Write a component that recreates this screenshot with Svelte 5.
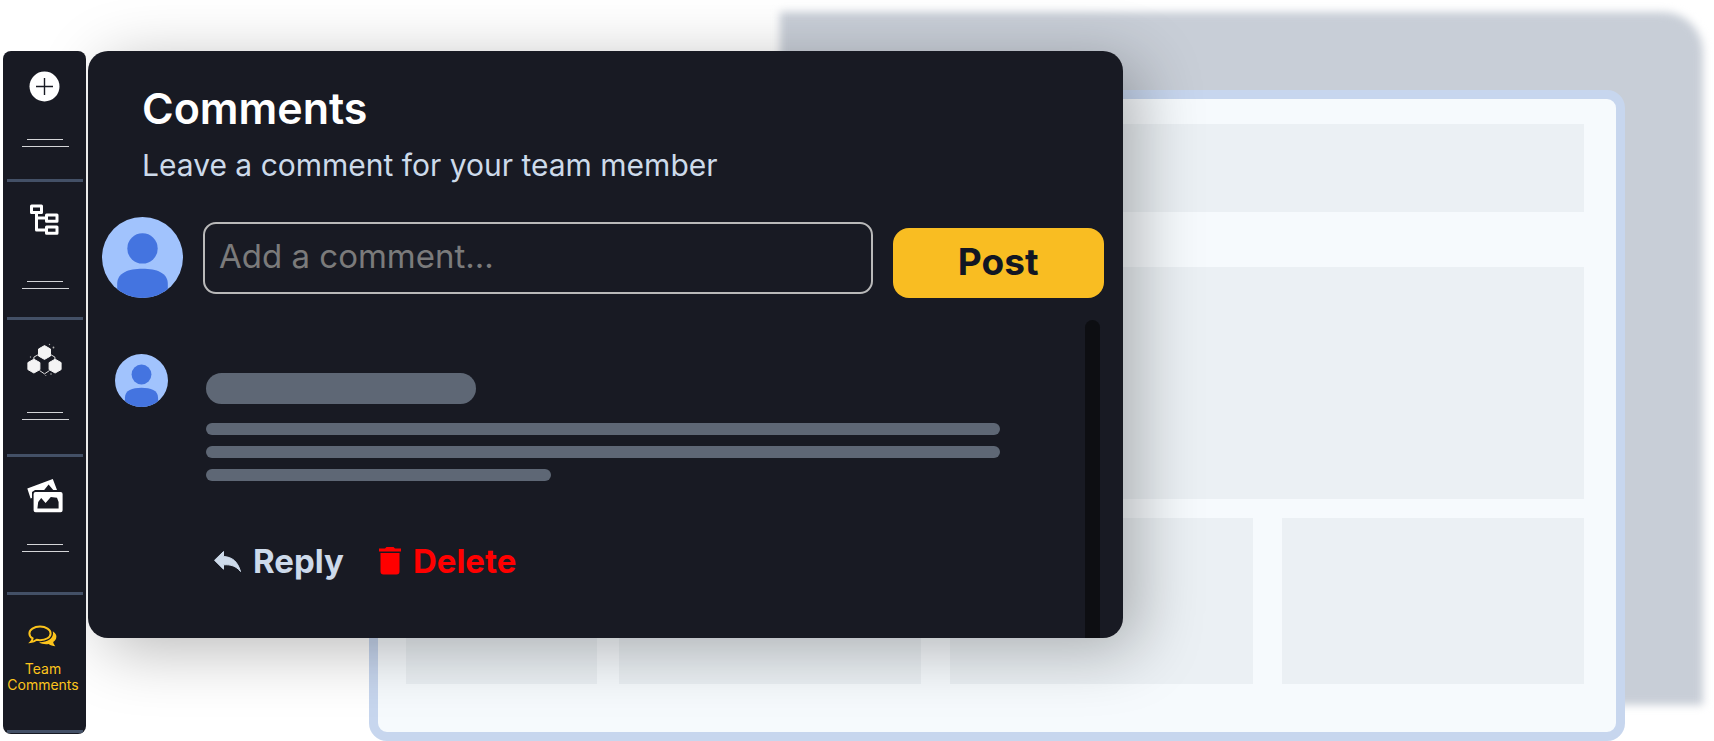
<script>
  const items = [
    { id: 'add', label: 'Add', gap: 32 },
    { id: 'tree', label: 'Structure', gap: 43 },
    { id: 'nodes', label: 'Modules', gap: 36 },
    { id: 'media', label: 'Media', gap: 31 },
  ];

  let comment = $state('');
</script>

{#snippet avatar()}
  <svg class="avatar" viewBox="0 0 80 80" aria-hidden="true">
    <clipPath id="avatar-clip"><circle cx="40" cy="40" r="40" /></clipPath>
    <circle cx="40" cy="40" r="40" fill="#a1c3fd" />
    <g clip-path="url(#avatar-clip)" fill="#4474e0">
      <circle cx="40" cy="31" r="15" />
      <path d="M15 66C15 55 26 51 40 51S65 55 65 66V80H15Z" />
    </g>
  </svg>
{/snippet}

<main>
  <div class="backdrop"></div>

  <div class="frame">
    <div class="block header"></div>
    <div class="block hero"></div>
    <div class="tiles">
      <div class="block small"></div>
      <div class="trio">
        <div class="block"></div>
        <div class="block"></div>
        <div class="block"></div>
      </div>
    </div>
  </div>

  <div class="front">
    <nav>
      {#each items as item}
        <button class="item" aria-label={item.label}>
          <svg class="icon" viewBox="0 0 36 36" aria-hidden="true">
            {#if item.id == 'add'}
              <circle cx="17.500" cy="15.500" r="15" fill="#fff" />
              <path d="M17.500 7v17M9 15.500h17" stroke="#181a23" stroke-width="1.4" />
            {:else if item.id == 'tree'}
              <g fill="none" stroke="#fff" stroke-width="3" stroke-linejoin="round">
                <path d="M4.5 4h10v6.4h-10zM19.500 13h10.500v6.200H19.500zM19.500 25h10.500v6.200H19.500zM9.500 10.500v17.600h10M9.500 16.100h10" />
              </g>
            {:else if item.id == 'nodes'}
              <g transform="translate(-.5 3)">
                <g fill="#f4f4f4" stroke="#f4f4f4" stroke-linejoin="round">
                  <path d="M18 2.600l6 3.400v7l-6 3.400L12 13V6z" />
                  <path d="M7.400 16.200l6 3.400v7l-6 3.400-6-3.400v-7z" />
                  <path d="M28.600 16.200l6 3.400v7l-6 3.400-6-3.400v-7z" />
                </g>
                <path d="M12 11.5l-4.6 2.6v2.4M24 11.5l4.4 2.6v2.4M13 27.500l5 3.400 5-3.400" fill="none" stroke="#ddd" stroke-width="1" />
                <g fill="#aaa">
                  <circle cx="23" cy="1.500" r=".7" />
                  <circle cx="27" cy="4.500" r=".9" />
                  <circle cx="4" cy="14" r=".7" />
                  <circle cx="24.500" cy="31" r=".8" />
                  <circle cx="19.300" cy="32.500" r=".6" />
                </g>
              </g>
            {:else}
              <path d="M.3 11.500L25.800 2 30 12.900H26.200L21.600 7.500l-4.400 5.400H8L5 15.100V21L3.600 21.500z" fill="#fff" />
              <path fill-rule="evenodd" d="M8.600 14.900h25a2 2 0 0 1 2 2v16.400a2 2 0 0 1-2 2h-25a2 2 0 0 1-2-2V16.900a2 2 0 0 1 2-2zM10.400 31.500h21.200V25l-1.600-4.300-6.200-.6-5.200 5.900-4.400-5-3 4z" fill="#fff" />
            {/if}
          </svg>
          <span class="dashes" style="margin-top: {item.gap}px"></span>
        </button>
      {/each}
      <button class="item active">
        <svg class="chat" viewBox="0 0 30 24" aria-hidden="true">
          <path d="M12 1.600c6 0 10.600 3 10.600 6.800s-4.600 6.800-10.600 6.800c-1.200 0-2.300-.1-3.300-.4-1.700 1.300-3.600 2.200-6 2.300 1-1 1.700-2.200 1.900-3.700C2.500 12.200 1.400 10.400 1.400 8.400c0-3.800 4.600-6.800 10.600-6.800z" fill="none" stroke="#fcc41c" stroke-width="2" />
          <path d="M24.800 6.200c2.200 1.400 3.600 3.300 3.600 5.400 0 2.400-1.300 4.200-3.200 5.500.3 1.600 1 2.900 2.200 4.200-2.700 0-5-.9-6.700-2.200-3.600.5-7.200 0-9.700-1.800C19 17.600 24.900 14 25 8.600z" fill="#fcc41c" />
        </svg>
        <span class="label">Team Comments</span>
      </button>
    </nav>

    <section class="panel">
      <h1>Comments</h1>
      <p>Leave a comment for your team member</p>

      <form class="composer" onsubmit={(e) => e.preventDefault()}>
        {@render avatar()}
        <input type="text" aria-label="Comment" placeholder="Add a comment..." bind:value={comment} />
        <button class="post">Post</button>
      </form>

      <div class="thread">
        {@render avatar()}
        <article>
          <div class="line author"></div>
          <div class="line"></div>
          <div class="line"></div>
          <div class="line short"></div>
          <div class="actions">
            <button class="reply">
              <svg width="27" height="21" viewBox="0 0 27 21" aria-hidden="true">
                <path d="M9.500.5v5C18 6 23.500 10 26.500 20.500 22 15 17 13.400 9.500 13.800v4.400L.5 9.300z" fill="currentColor" stroke="currentColor" stroke-linejoin="round" />
              </svg>
              Reply
            </button>
            <button class="delete">
              <svg width="22" height="28" viewBox="0 0 22 28" aria-hidden="true">
                <path d="M0 1.500h6L7.500 0h7L16 1.500h6v3H0zM1.500 6h19v18.500a3 3 0 0 1-3 3h-13a3 3 0 0 1-3-3z" fill="currentColor" />
              </svg>
              Delete
            </button>
          </div>
        </article>
        <div class="track"></div>
      </div>
    </section>
  </div>
</main>

<style>
  :global(body) {
    margin: 0;
    background: #fff;
  }
  main {
    display: grid;
    overflow: hidden;
    font-family: Inter, 'Liberation Sans', sans-serif;
  }
  main > div {
    grid-area: 1 / 1;
    box-sizing: border-box;
  }
  button {
    padding: 0;
    border: 0;
    background: none;
    font-family: inherit;
    cursor: pointer;
  }
  .backdrop {
    margin: 12px 11px 36px 45.5%;
    border-radius: 0 40px 0 0;
    background: #c8ced7;
    filter: blur(4px);
  }
  .frame {
    display: flex;
    flex-direction: column;
    margin: 90px 89px 0 21.5%;
    padding: 25px 32px 48px 28px;
    border: 9px solid #c7d6ee;
    border-radius: 18px;
    background: #f6fafd;
    z-index: 1;
  }
  .block {
    background: #ebf0f4;
  }
  .header {
    height: 88px;
  }
  .hero {
    height: 232px;
    margin: 55px 0 19px;
  }
  .tiles {
    display: flex;
    flex: 1;
    gap: 22px;
    min-height: 166px;
  }
  .small {
    flex: 191;
  }
  .trio {
    display: grid;
    flex: 965;
    grid-template-columns: repeat(3, 1fr);
    gap: 29px;
  }

  .front {
    display: flex;
    align-items: flex-start;
    gap: 2px;
    width: 65.5%;
    padding: 51px 0 7px 3px;
    z-index: 2;
  }
  nav {
    display: grid;
    flex: none;
    grid-template-rows: 131px 138px 137px 138px 138px;
    box-sizing: border-box;
    width: 83px;
    padding: 0 3px 1px 4px;
    border-radius: 8px;
    background: #181a23;
    overflow: hidden;
    z-index: 1;
  }
  .item {
    display: flex;
    flex-direction: column;
    align-items: center;
    padding-top: 20px;
    border-bottom: 3px solid #435066;
  }
  .icon {
    width: 36px;
    height: 36px;
  }
  .dashes {
    width: 47px;
    height: 8px;
    border-bottom: 1px solid #d4d5d8;
    box-sizing: border-box;
  }
  .dashes::before {
    content: '';
    display: block;
    width: 36px;
    margin: 0 auto;
    border-top: 1px solid #d4d5d8;
  }
  .active {
    padding-top: 30px;
    color: #fcc41c;
  }
  .chat {
    width: 30px;
    height: 24px;
    margin-right: 4px;
  }
  .label {
    width: 72px;
    margin: 12px 4px 0 0;
    font-size: 14px;
    line-height: 16px;
  }

  .panel {
    display: flex;
    flex: 1;
    flex-direction: column;
    min-width: 0;
    border-radius: 20px;
    background: #181a23;
    box-shadow: 16px 12px 64px rgba(0, 0, 0, 0.28);
    overflow: hidden;
  }
  h1 {
    margin: 32px 0 0 54px;
    color: #fff;
    font-size: 43px;
    font-weight: 600;
    line-height: 50px;
  }
  p {
    margin: 12px 0 0 54px;
    color: #cddaea;
    font-size: 30px;
    line-height: 40px;
  }
  .composer {
    display: flex;
    align-items: center;
    gap: 20px;
    margin: 32px 19px 0 14px;
  }
  .composer .avatar {
    flex: none;
    width: 81px;
    height: 81px;
  }
  input {
    flex: 1;
    box-sizing: border-box;
    min-width: 0;
    height: 72px;
    padding: 0 14px 3px;
    border: 2px solid #b9b9b9;
    border-radius: 13px;
    background: none;
    color: #fff;
    font-family: inherit;
    font-size: 33px;
  }
  input::placeholder {
    color: #7b7b7b;
    opacity: 1;
  }
  .post {
    align-self: flex-end;
    width: 211px;
    height: 70px;
    padding-bottom: 4px;
    border-radius: 16px;
    background: #f9bd22;
    color: #121623;
    font-size: 37px;
    font-weight: 700;
  }
  .thread {
    display: flex;
    margin: 22px 23px 0 27px;
  }
  .thread .avatar {
    flex: none;
    width: 53px;
    height: 53px;
    margin-top: 34px;
  }
  article {
    flex: 1;
    margin: 53px 85px 0 38px;
  }
  .line {
    height: 12px;
    margin-bottom: 11px;
    border-radius: 6px;
    background: #5e6775;
  }
  .author {
    width: 34%;
    height: 31px;
    margin-bottom: 19px;
    border-radius: 16px;
  }
  .short {
    width: 43.5%;
  }
  .actions {
    display: flex;
    gap: 35px;
    margin: 60px 0 0 8px;
    padding-bottom: 57px;
  }
  .actions button {
    display: flex;
    align-items: center;
    gap: 12px;
    font-size: 33px;
    font-weight: 700;
    line-height: 40px;
  }
  .reply {
    color: #cddaea;
  }
  .delete {
    color: #f00;
  }
  .track {
    flex: none;
    width: 15px;
    border-radius: 8px 8px 0 0;
    background: #0d0e12;
  }
</style>
